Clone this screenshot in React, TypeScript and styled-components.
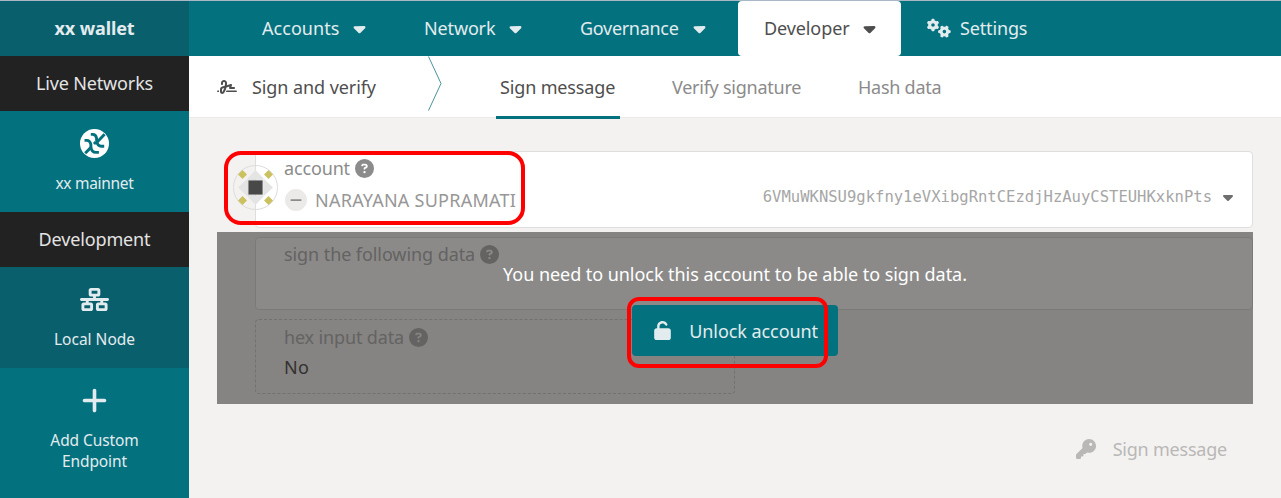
import React from 'react';
import styled, { createGlobalStyle } from 'styled-components';
import { FaCaretDown, FaGears, FaSignature, FaCircleQuestion, FaMinus, FaNetworkWired, FaPlus, FaUnlock, FaKey } from 'react-icons/fa6';

const GlobalStyle = createGlobalStyle`
  * { box-sizing: border-box; }
  body { margin: 0; background: #f3f2f0; font-family: 'Noto Sans', 'Open Sans', sans-serif; font-size: 18px; line-height: 26px; color: #4e4e4e; overflow: hidden; }
  svg { display: block; flex: none; }
`;

const Page = styled.div`
  display: flex;
  width: 1281px;
  height: 498px;
  border-top: 1px solid #a9b8c4;
  position: relative;
`;
const Label = styled.span<{ $ls?: number; $size?: number }>`
  white-space: nowrap;
  letter-spacing: ${(p) => p.$ls ?? -0.15}px;
  font-size: ${(p) => p.$size ?? 18}px;
`;

const Sidebar = styled.aside`
  width: 189px;
  flex: none;
  background: #04717f;
  color: #e2ecee;
  display: flex;
  flex-direction: column;
`;
const Brand = styled.div`
  height: 55px;
  padding-bottom: 2px;
  background: #0a5f6d;
  display: flex;
  align-items: center;
  justify-content: center;
  font-weight: 700;
`;
const GroupTitle = styled.div`
  height: 55px;
  padding-bottom: 2px;
  background: #222;
  color: #e4e4e4;
  display: flex;
  align-items: center;
  justify-content: center;
`;
const Endpoint = styled.div<{ $active?: boolean; $tall?: boolean }>`
  height: ${(p) => (p.$tall ? 130 : 101)}px;
  background: ${(p) => (p.$active ? '#0a5f6d' : '#04717f')};
  display: flex;
  flex-direction: column;
  align-items: center;
  padding-top: 17px;
  gap: 14px;
  line-height: 21px;
  text-align: center;
`;
const EndpointIcon = styled.div`
  height: 31px;
  display: flex;
  align-items: center;
`;

const Main = styled.main`
  flex: 1;
  min-width: 0;
`;
const TopNav = styled.nav`
  height: 55px;
  background: #04717f;
  color: #e2ecee;
  display: flex;
  gap: 7px;
  padding-left: 47px;
`;
const NavItem = styled.div<{ $w: number; $active?: boolean }>`
  width: ${(p) => p.$w}px;
  padding: 0 22px 2px 26px;
  display: flex;
  align-items: center;
  justify-content: space-between;
  border-radius: 4px;
  background: ${(p) => (p.$active ? '#fff' : 'transparent')};
  color: ${(p) => (p.$active ? '#4e4e4e' : 'inherit')};
  svg {
    margin-top: 2px;
  }
`;
const SettingsItem = styled.div`
  display: flex;
  align-items: center;
  gap: 9px;
  padding: 0 0 2px 19px;
`;
const SubNav = styled.div`
  height: 62px;
  background: #fff;
  border-bottom: 1px solid #ebeae8;
  display: flex;
  padding-left: 28px;
`;
const Section = styled.div`
  width: 211px;
  height: 62px;
  display: flex;
  align-items: center;
  gap: 15px;
`;
const Tab = styled.div<{ $active?: boolean; $w: number }>`
  width: ${(p) => p.$w}px;
  height: 63px;
  display: flex;
  align-items: center;
  padding: 1px 0 0 4px;
  border-bottom: 3px solid ${(p) => (p.$active ? '#04717f' : 'transparent')};
  color: ${(p) => (p.$active ? '#4e4e4e' : '#8b8b8b')};
`;
const Tabs = styled.div`
  display: flex;
  gap: 48px;
  padding-left: 54px;
`;

const Form = styled.section`
  padding: 33px 28px 0;
  position: relative;
`;
const Field = styled.div<{ $h: number }>`
  margin-left: 38px;
  height: ${(p) => p.$h}px;
  padding: 2px 18px 0 28px;
  background: #fff;
  border: 1px solid #dedede;
  border-radius: 4px;
  position: relative;
`;
const HexField = styled(Field)`
  width: 480px;
  background: transparent;
  border-style: dashed;
  border-color: #ccc;
  margin-top: 9px;
  padding-top: 3px;
`;
const FieldLabel = styled.div<{ $muted?: boolean }>`
  display: flex;
  align-items: center;
  gap: 5px;
  color: ${(p) => (p.$muted ? '#b0b0b0' : '#8b8b8b')};
  height: 28px;
`;
const AccountRow = styled.div`
  display: flex;
  align-items: center;
  height: 36px;
  color: #979797;
`;
const Minus = styled.span`
  width: 22px;
  height: 22px;
  margin: 0 8px 0 1px;
  border-radius: 50%;
  background: #ebeae9;
  color: #8b8b8b;
  display: flex;
  align-items: center;
  justify-content: center;
`;
const Address = styled.span`
  margin-left: auto;
  margin-right: 8px;
  padding-bottom: 7px;
  font-family: 'DejaVu Sans Mono', monospace;
  font-size: 15.55px;
  color: #a6a6a6;
`;
const Caret = styled.span`
  margin-right: -2px;
  padding-bottom: 7px;
  color: #6e6e6e;
`;
const Identicon = styled.svg`
  position: absolute;
  left: -23px;
  top: 13px;
`;
const Locked = styled.div`
  position: relative;
  margin: 4px 0 0;
  padding-top: 5px;
  height: 172px;
`;
const HexValue = styled.div`
  height: 32px;
  display: flex;
  align-items: center;
  color: #4e4e4e;
`;
const Overlay = styled.div`
  position: absolute;
  inset: 0;
  background: rgba(23, 22, 20, 0.5);
  color: #fff;
  display: flex;
  flex-direction: column;
  align-items: center;
  padding-top: 29px;
`;
const UnlockButton = styled.button`
  margin-top: 18px;
  width: 206px;
  height: 51px;
  padding: 0 20px 0 21px;
  border: 0;
  border-radius: 4px;
  background: #04717f;
  color: #e2ecee;
  font: inherit;
  display: flex;
  align-items: center;
  justify-content: space-between;
`;
const Actions = styled.div`
  display: flex;
  align-items: center;
  justify-content: flex-end;
  gap: 17px;
  height: 50px;
  padding-right: 26px;
  margin-top: 20px;
  color: #b9b8b7;
`;
const Highlight = styled.div<{ $x: number; $y: number; $w: number; $h: number; $r: number }>`
  position: absolute;
  left: ${(p) => p.$x}px;
  top: ${(p) => p.$y}px;
  width: ${(p) => p.$w}px;
  height: ${(p) => p.$h}px;
  border: 4px solid #f00;
  border-radius: ${(p) => p.$r}px;
  pointer-events: none;
`;

const XxLogo = () => (
  <svg width="29" height="29" viewBox="0 0 29 29">
    <circle cx="14.5" cy="14.5" r="14.5" fill="#fff" />
    <g fill="none" stroke="#04717f" strokeWidth="2.9">
      <path d="M4.500 11.400h2c2.600 0 4 1.600 4.400 4.400v2c.4 3.400 2.200 5.600 5 5.600h3" />
      <path d="M5.200 24.200L11 18.400" />
      <path d="M10.800 5.400h1.800c2.400 0 3.600 1.400 4 4v2.200c.4 3.400 2 5.600 4.800 5.600h2.800" />
      <path d="M24.600 5.200l-7.400 7.800M15.800 13l-1.800 2" />
    </g>
  </svg>
);

const AccountIcon = () => (
  <Identicon width="45" height="45" viewBox="0 0 45 45">
    <circle cx="22.5" cy="22.5" r="22" fill="none" stroke="#dcdcdc" />
    <path d="M22.500 5l8.500 9h-17zM22.500 40l8.500-9h-17zM5 22.500l9-8.500v17zM40 22.500l-9-8.500v17z" fill="#e4e4e4" />
    <rect x="15" y="15" width="15" height="15" fill="#484848" stroke="#d2d2d2" />
    {[[9.5, 9.5], [35.5, 9.5], [9.5, 35.5], [35.5, 35.5]].map(([x, y]) => (
      <path key={`${x}-${y}`} d={`M${x} ${y - 4.5}l4.500 4.500-4.500 4.500-4.500-4.500z`} fill="#cbc25f" />
    ))}
  </Identicon>
);

const menus = [
  { name: 'Accounts', w: 155, ls: 0.05 },
  { name: 'Network', w: 149, ls: -0.15 },
  { name: 'Governance', w: 177, ls: -0.3 },
  { name: 'Developer', w: 163, ls: -0.1, active: true },
];

export default function App() {
  return (
    <>
      <GlobalStyle />
      <Page>
        <Sidebar>
          <Brand><Label $ls={-0.1}>xx wallet</Label></Brand>
          <GroupTitle><Label>Live Networks</Label></GroupTitle>
          <Endpoint>
            <EndpointIcon><XxLogo /></EndpointIcon>
            <Label $size={15.5} $ls={-0.3}>xx mainnet</Label>
          </Endpoint>
          <GroupTitle><Label>Development</Label></GroupTitle>
          <Endpoint $active>
            <EndpointIcon><FaNetworkWired size={29} /></EndpointIcon>
            <Label $size={15.5} $ls={0}>Local Node</Label>
          </Endpoint>
          <Endpoint $tall>
            <EndpointIcon><FaPlus size={29} /></EndpointIcon>
            <Label $size={15.5} $ls={-0.1}>Add Custom<br />Endpoint</Label>
          </Endpoint>
        </Sidebar>
        <Main>
          <TopNav>
            {menus.map((m) => (
              <NavItem key={m.name} $w={m.w} $active={m.active}>
                <Label $ls={m.ls}>{m.name}</Label>
                <FaCaretDown size={19} />
              </NavItem>
            ))}
            <SettingsItem>
              <FaGears size={24} />
              <Label>Settings</Label>
            </SettingsItem>
          </TopNav>
          <SubNav>
            <Section><FaSignature size={20} /><Label $ls={-0.08}>Sign and verify</Label></Section>
            <svg width="14" height="55" viewBox="0 0 14 55" fill="none" stroke="#4b939d">
              <path d="M0.500 0.500L13 27.500L0.500 54.500" />
            </svg>
            <Tabs>
              <Tab $w={124} $active><Label>Sign message</Label></Tab>
              <Tab $w={138}><Label $ls={-0.25}>Verify signature</Label></Tab>
              <Tab $w={92}><Label $ls={-0.25}>Hash data</Label></Tab>
            </Tabs>
          </SubNav>
          <Form>
            <Field $h={77}>
              <AccountIcon />
              <FieldLabel><Label>account</Label><FaCircleQuestion size={19} /></FieldLabel>
              <AccountRow>
                <Minus><FaMinus size={14} /></Minus>
                <Label $ls={0.25}>NARAYANA SUPRAMATI</Label>
                <Address>6VMuWKNSU9gkfny1eVXibgRntCEzdjHzAuyCSTEUHKxknPts</Address>
                <Caret><FaCaretDown size={16} /></Caret>
              </AccountRow>
            </Field>
            <Locked>
              <Field $h={73}>
                <FieldLabel $muted><Label $ls={-0.08}>sign the following data</Label><FaCircleQuestion size={19} /></FieldLabel>
              </Field>
              <HexField $h={75}>
                <FieldLabel $muted><Label>hex input data</Label><FaCircleQuestion size={19} /></FieldLabel>
                <HexValue><Label $ls={0.2}>No</Label></HexValue>
              </HexField>
              <Overlay>
                <Label $ls={-0.05}>You need to unlock this account to be able to sign data.</Label>
                <UnlockButton><FaUnlock size={19} /><Label $ls={-0.07}>Unlock account</Label></UnlockButton>
              </Overlay>
            </Locked>
            <Actions><FaKey size={20} /><Label $ls={-0.22}>Sign message</Label></Actions>
          </Form>
        </Main>
        <Highlight $x={224} $y={150} $w={301} $h={74} $r={17} />
        <Highlight $x={627} $y={296} $w={201} $h={71} $r={12} />
      </Page>
    </>
  );
}
